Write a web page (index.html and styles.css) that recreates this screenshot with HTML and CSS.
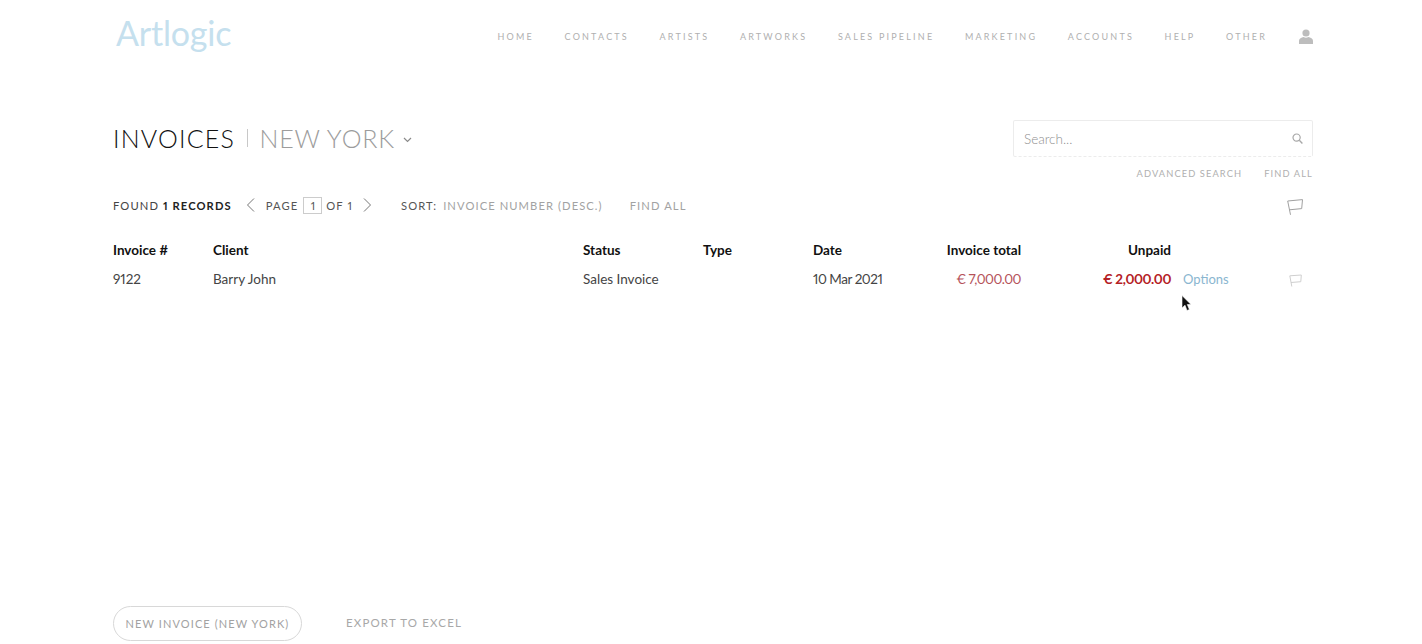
FILE: index.html
```html
<!DOCTYPE html>
<html lang="en">
<head>
<meta charset="utf-8">
<title>Invoices</title>
<link rel="stylesheet" href="styles.css">
</head>
<body>
<div class="page">
  <header class="top">
    <a class="logo">Artlogic</a>
    <nav class="nav">
      <a>HOME</a><a>CONTACTS</a><a>ARTISTS</a><a>ARTWORKS</a><a>SALES PIPELINE</a><a>MARKETING</a><a>ACCOUNTS</a><a>HELP</a><a>OTHER</a>
      <svg class="user" width="14" height="15" viewBox="0 0 14 15"><circle cx="7" cy="4" r="3.6" fill="#bdbdbd"/><path d="M0 15v-3.2C0 9.6 2.5 8.6 4.6 8c1.4.9 3.4.9 4.8 0 2.100.6 4.600 1.600 4.600 3.800V15z" fill="#bdbdbd"/></svg>
    </nav>
  </header>

  <section class="title-row">
    <h1 class="title"><span class="t-main">INVOICES</span><span class="t-sep"></span><span class="t-sub">NEW YORK</span>
      <svg class="chev" width="9" height="6" viewBox="0 0 9 6"><path d="M1 1l3.500 3.500L8 1" fill="none" stroke="#8a8a8a" stroke-width="1.200"/></svg>
    </h1>
    <div class="search-col">
      <div class="search">
        <span class="placeholder">Search...</span>
        <svg width="11" height="11" viewBox="0 0 11 11"><circle cx="4.600" cy="4.600" r="3.600" fill="none" stroke="#a8a8a8" stroke-width="1.200"/><path d="M7.300 7.300L10.400 10.400" stroke="#a8a8a8" stroke-width="1.400"/></svg>
      </div>
      <div class="search-links"><a>ADVANCED SEARCH</a><a>FIND ALL</a></div>
    </div>
  </section>

  <section class="tools">
    <span class="found">FOUND <b>1 RECORDS</b></span>
    <svg class="arrow first" width="9" height="14" viewBox="0 0 9 14"><path d="M8 .5L1.500 7 8 13.500" fill="none" stroke="#777" stroke-width="1"/></svg>
    <span class="pg">PAGE</span><span class="pgbox">1</span><span class="pg">OF 1</span>
    <svg class="arrow" width="9" height="14" viewBox="0 0 9 14"><path d="M1 .5L7.500 7 1 13.500" fill="none" stroke="#777" stroke-width="1"/></svg>
    <span class="sort">SORT:</span><span class="sortv">INVOICE NUMBER (DESC.)</span><span class="findall">FIND ALL</span>
    <svg class="flag" width="16" height="16" viewBox="0 0 16 16"><path d="M3.500 15.800L.7 2 15.500.6l-.8 9-12.200 1.200" fill="none" stroke="#a0a0a0" stroke-width="1"/></svg>
  </section>

  <section class="table">
    <div class="th">Invoice #</div><div class="th">Client</div><div class="th">Status</div><div class="th">Type</div><div class="th">Date</div><div class="th num">Invoice total</div><div class="th num">Unpaid</div><div></div><div></div>
    <div class="td">9122</div><div class="td">Barry John</div><div class="td">Sales Invoice</div><div class="td"></div><div class="td date">10 Mar 2021</div><div class="td num red">€ 7,000.00</div><div class="td num red-b">€ 2,000.00</div><div class="td opt">Options</div>
    <div class="td"><svg class="flag-s" width="13" height="13" viewBox="0 0 13 13"><path d="M2.800 12.500L.8 1.800 12.300 1l-.5 6.700-9.800.8" fill="none" stroke="#cfcfcf" stroke-width="1"/></svg></div>
  </section>

  <footer class="bottom">
    <a class="btn">NEW INVOICE (NEW YORK)</a>
    <a class="export">EXPORT TO EXCEL</a>
  </footer>
</div>
<svg class="cursor" width="11" height="17" viewBox="0 0 11 17"><path d="M1 0.500V13l3-2.800 2 5.300 2.400-1-2.100-5H10z" fill="#111" stroke="#fff" stroke-width=".6"/></svg>
</body>
</html>
```
FILE: styles.css
```css
* { box-sizing: border-box; }
html, body { margin: 0; height: 100%; }
body { background: #fff; font-family: "Lato", "Open Sans", sans-serif; color: #333; overflow: hidden; font-variant-numeric: proportional-nums; }
.page { height: 644px; padding: 0 109px 0 113px; display: flex; flex-direction: column; }

.top { display: flex; justify-content: space-between; align-items: flex-start; height: 120px; }
.logo { font-size: 34px; line-height: 40px; color: #c5e0ee; margin: 13px 0 0 3px; font-weight: 400; letter-spacing: -.2px; }
.nav { display: flex; align-items: center; gap: 30.600px; margin-top: 29px; height: 15px; font-size: 9px; letter-spacing: 2.200px; color: #b0b0b0; }
.user { margin-left: 1.400px; }

.title-row { display: flex; justify-content: space-between; align-items: flex-start; height: 64px; }
.title { margin: 3px 0 0; font-size: 25px; line-height: 30px; font-weight: 300; display: flex; align-items: center; }
.t-main { color: #111; letter-spacing: 1.200px; }
.t-sep { width: 1px; height: 18px; background: #c8c8c8; margin: 0 11.500px 0 12px; }
.t-sub { color: #9c9c9c; letter-spacing: .8px; }
.chev { margin-left: 8px; margin-top: 3px; }
.search-col { width: 300px; display: flex; flex-direction: column; }
.search { height: 37px; border: 1px solid #ececec; border-bottom-style: dashed; border-radius: 2px; display: flex; align-items: center; justify-content: space-between; padding: 0 9px 0 10px; }
.placeholder { font-size: 13.500px; color: #8f8f8f; font-weight: 300; }
.search-links { display: flex; justify-content: flex-end; gap: 22px; margin-top: 11px; font-size: 9.300px; letter-spacing: 1.100px; line-height: 12px; color: #b0b0b0; }

.tools { display: flex; align-items: center; height: 20px; font-size: 11.200px; letter-spacing: 1.100px; color: #444; margin-top: 11px; }
.found b { font-weight: 700; color: #222; }
.pg { color: #555; margin: 0 4px; }
.arrow { margin-left: 6px; }
.arrow.first { margin-left: 14px; }
.arrow + .pg { margin-left: 11px; }
.pgbox { width: 19px; height: 17px; border: 1px solid #ccc; margin-left: 1px; text-align: center; font-size: 11px; line-height: 15px; letter-spacing: 0; color: #555; }
.sort { margin-left: 29px; color: #555; }
.sortv { margin-left: 6px; color: #a2a2a2; letter-spacing: 1.080px; }
.findall { margin-left: 27px; color: #a2a2a2; }
.flag { margin: 3px 10px 0 auto; }

.table { display: grid; grid-template-columns: 100px 370px 120px 110px 120px 88px 150px 118px 1fr; grid-template-rows: 28px 30px; margin-top: 21px; font-size: 13.500px; }
.th { font-weight: 700; color: #111; line-height: 28px; }
.td { color: #444; line-height: 28px; font-weight: 400; display: flex; align-items: center; }
.num { text-align: right; justify-content: flex-end; }
.date { letter-spacing: -.45px; }
.red { color: #b5525a; letter-spacing: -.5px; }
.red-b { color: #b42025; font-weight: 700; letter-spacing: -.4px; }
.opt { color: #8ab6d0; padding-left: 12px; font-size: 13px; }
.flag-s { margin-top: 2px; }

.bottom { margin-top: auto; margin-bottom: 3px; display: flex; align-items: center; gap: 44px; }
.btn { height: 35px; width: 189px; border: 1px solid #d8d8d8; border-radius: 18px; display: flex; align-items: center; justify-content: center; font-size: 11px; letter-spacing: 1.100px; color: #a2a2a2; padding-bottom: 1px; }
.export { font-size: 11.500px; letter-spacing: 1.150px; color: #a8a8a8; margin-top: -2px; }

.cursor { position: absolute; left: 1181px; top: 295px; }
```
